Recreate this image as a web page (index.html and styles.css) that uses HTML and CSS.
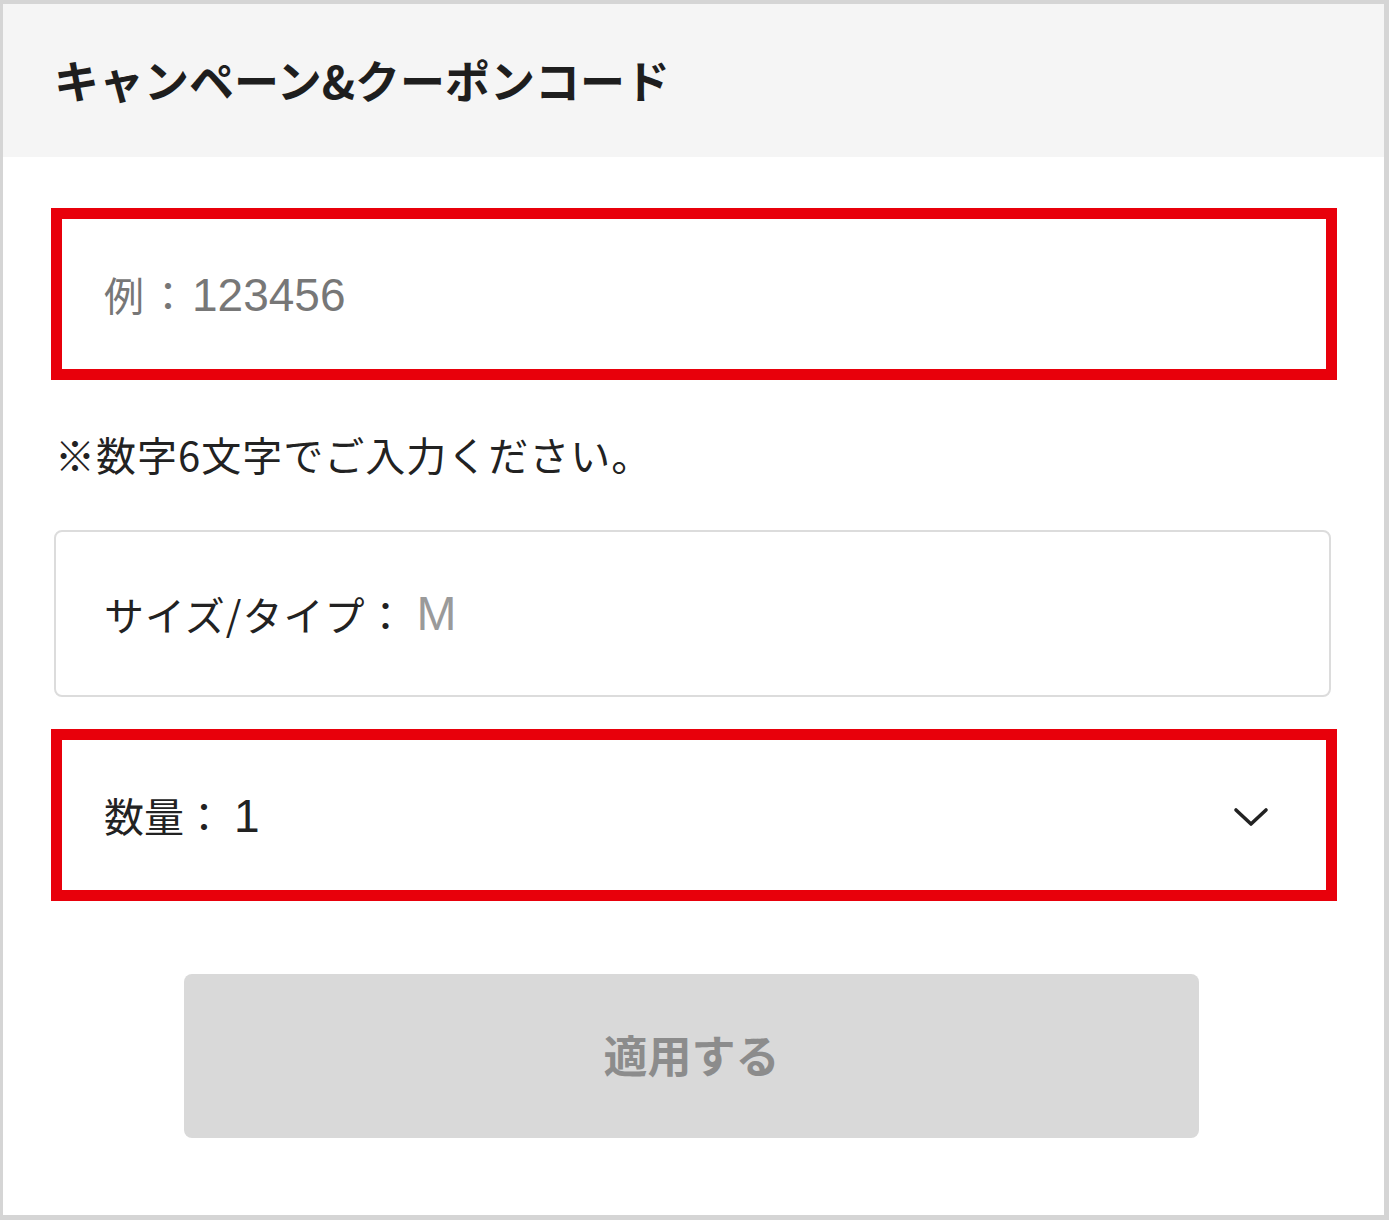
FILE: index.html
```html
<!DOCTYPE html>
<html lang="ja">
<head>
<meta charset="utf-8">
<link rel="stylesheet" href="styles.css">
</head>
<body>
<div class="frame">
  <div class="header"><h1 class="title">キャンペーン&amp;クーポンコード</h1></div>
  <div class="content">
    <div class="field field-red coupon"><span class="placeholder">例：<span class="num">123456</span></span></div>
    <p class="note">※数字6文字でご入力ください。</p>
    <div class="field size"><span class="label">サイズ/タイプ：</span><span class="value">M</span></div>
    <div class="field field-red qty">
      <span class="label qty-label">数量：<span class="num">1</span></span>
      <svg class="chev" width="38" height="22" viewBox="0 0 38 22"><polyline points="4,4 19,18 34,4" fill="none" stroke="#222" stroke-width="3.6" stroke-linecap="round" stroke-linejoin="round"/></svg>
    </div>
    <div class="btn-row"><button class="apply">適用する</button></div>
  </div>
</div>
</body>
</html>
```
FILE: styles.css
```css
* { box-sizing: border-box; }
html, body { margin: 0; padding: 0; background: #fff; }
body { font-family: "Noto Sans CJK JP", "Noto Sans", sans-serif; color: #222; }
.frame {
  width: 1389px;
  height: 1220px;
  border: 4px solid #d5d5d5;
  border-left-width: 3px;
  border-right-width: 5px;
  border-bottom-width: 5px;
}
.header {
  height: 153px;
  background: #f5f5f5;
  display: flex;
  align-items: center;
  padding-left: 51px;
  padding-bottom: 2px;
}
.title {
  margin: 0;
  font-size: 45px;
  font-weight: 700;
  color: #1e1e1e;
}
.content { display: flex; flex-direction: column; }
.field { display: flex; align-items: center; }
.field-red {
  margin-left: 48px;
  width: 1286px;
  height: 172px;
  border: 11px solid #e8000b;
  padding-left: 42px;
  padding-right: 56px;
}
.coupon { margin-top: 51px; }
.placeholder { font-size: 40px; color: #777; letter-spacing: 4px; }
.num {
  font-family: "Liberation Sans", Arial, sans-serif;
  font-size: 46px;
  letter-spacing: 0;
}
.note {
  margin: 46px 0 0 52px;
  font-size: 40px;
  line-height: 56px;
  color: #222;
  letter-spacing: 1px;
}
.size {
  margin-top: 48px;
  margin-left: 51px;
  width: 1277px;
  height: 167px;
  border: 2px solid #dcdcdc;
  border-radius: 8px;
  padding-left: 48px;
}
.label { font-size: 40px; color: #222; letter-spacing: 1px; }
.value {
  font-family: "Liberation Sans", Arial, sans-serif;
  font-size: 48px;
  color: #9a9a9a;
  margin-left: 10px;
}
.qty { margin-top: 32px; justify-content: space-between; }
.qty-label { letter-spacing: 0; }
.qty-label .num { margin-left: 10px; }
.chev { display: block; margin-top: 4px; }
.btn-row { margin-top: 73px; padding-left: 181px; }
.apply {
  width: 1015px;
  height: 164px;
  border: none;
  border-radius: 8px;
  background: #d9d9d9;
  font-family: "Noto Sans CJK JP", "Noto Sans", sans-serif;
  font-size: 44px;
  font-weight: 700;
  color: #8c8c8c;
  padding: 0 0 4px 0;
}
```
